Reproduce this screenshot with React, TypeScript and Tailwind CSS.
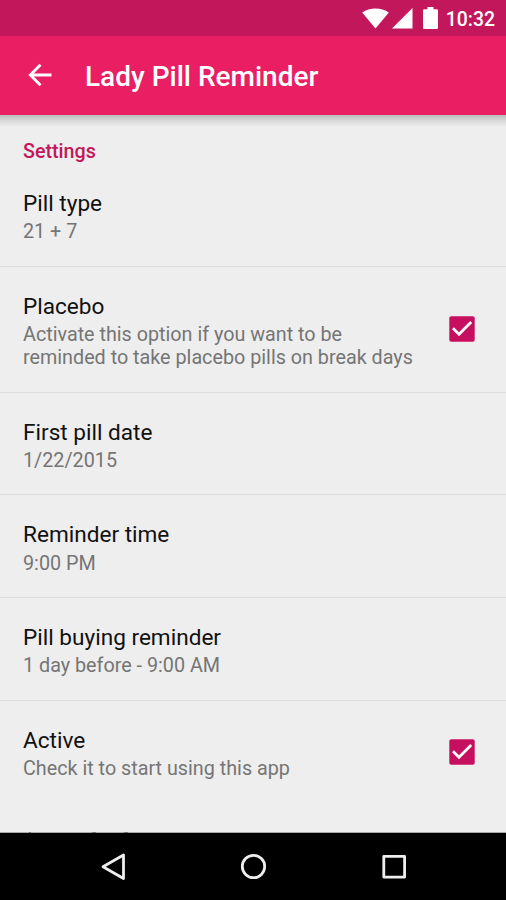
type Preference = {
  title: string;
  summary: string;
  checked?: boolean;
  size: string;
};

const preferences: Preference[] = [
  { title: "Pill type", summary: "21 + 7", size: "h-[103px]" },
  {
    title: "Placebo",
    summary:
      "Activate this option if you want to be reminded to take placebo pills on break days",
    checked: true,
    size: "h-[125.7px]",
  },
  { title: "First pill date", summary: "1/22/2015", size: "h-[102.7px]" },
  { title: "Reminder time", summary: "9:00 PM", size: "h-[102.7px]" },
  {
    title: "Pill buying reminder",
    summary: "1 day before - 9:00 AM",
    size: "h-[102.7px]",
  },
  {
    title: "Active",
    summary: "Check it to start using this app",
    checked: true,
    size: "h-[102.7px]",
  },
];

function StatusBar() {
  return (
    <div className="flex h-9 items-center justify-end bg-[#c2185b] pr-[11px] text-white">
      <svg width="27" height="21" viewBox="0 0 27 21" fill="currentColor">
        <path d="M13.5 20.5 0.2 4.6C4 1.7 8.5.5 13.5.5s9.5 1.2 13.3 4.1z" />
      </svg>
      <svg className="ml-[3px]" width="21" height="21" viewBox="0 0 21 21" fill="currentColor">
        <path d="M20.5 0v20.5H0z" />
      </svg>
      <svg className="ml-[10px]" width="15" height="22" viewBox="0 0 15 22" fill="currentColor">
        <path d="M4.5 0h6v2.2h3.3q1.2 0 1.2 1.2v17.4q0 1.2-1.2 1.2H1.2Q0 22 0 20.8V3.4q0-1.2 1.2-1.2h3.3z" />
      </svg>
      <span className="ml-[8px] mt-[3px] text-[19.4px] leading-6 font-medium">10:32</span>
    </div>
  );
}

function AppBar() {
  return (
    <header className="flex h-[78.5px] shrink-0 items-center bg-[#e91e63] pl-7 text-white">
      <svg width="24" height="24" viewBox="0 0 24 24" fill="none" stroke="currentColor" strokeWidth="2.8">
        <path d="M23.5 12H2.5M12.5 1.8 2.3 12l10.2 10.2" />
      </svg>
      <h1 className="ml-[33px] mt-1 text-[28px] leading-8 font-medium whitespace-nowrap">
        Lady Pill Reminder
      </h1>
    </header>
  );
}

function Checkbox() {
  return (
    <svg className="shrink-0" width="26" height="26" viewBox="0 0 26 26">
      <rect x="0.3" y="0.3" width="25.4" height="25.4" rx="2" fill="#c70f60" />
      <path d="m4 12.3 6 6L22.2 6" fill="none" stroke="#fff" strokeWidth="2.7" />
    </svg>
  );
}

function PreferenceRow({ title, summary, checked, size }: Preference) {
  return (
    <li
      className={`flex items-center justify-between border-b border-[#dcdcdc] pl-[23px] pr-[31px] last:border-transparent ${size}`}
    >
      <div className="w-[400px] pt-[3.6px]">
        <h3 className="text-[22.6px] leading-[27px] text-[#111]">{title}</h3>
        <p className="mt-[3.4px] text-[19.75px] leading-[23px] text-[#757575]">{summary}</p>
      </div>
      {checked && <Checkbox />}
    </li>
  );
}

function NavigationBar() {
  return (
    <nav className="flex h-[67px] shrink-0 items-start justify-center bg-black">
      <svg width="506" height="66" viewBox="0 0 506 66" fill="none" stroke="#eee" strokeWidth="2.8" strokeLinejoin="round">
        <path d="M123.5 22v23.5L103 33.7z" />
        <circle cx="253.5" cy="33.5" r="11.2" />
        <rect x="383.8" y="23.3" width="20.8" height="20.8" />
      </svg>
    </nav>
  );
}

export default function App() {
  return (
    <div className="flex h-[900px] w-[506px] flex-col overflow-hidden bg-[#eee] font-[Roboto,sans-serif]">
      <StatusBar />
      <AppBar />
      <main className="flex min-h-0 flex-1 flex-col overflow-hidden">
        <div className="h-3 shrink-0 bg-linear-to-b from-[#bcbcbc] via-[#dadada] to-[#eee]" />
        <h2 className="h-[37.5px] shrink-0 pt-[13px] pl-[23px] text-[19.7px] leading-6 font-medium text-[#c2185b]">
          Settings
        </h2>
        <ul>
          {preferences.map((preference) => (
            <PreferenceRow key={preference.title} {...preference} />
          ))}
        </ul>
        {/* tops of the next entry, cut off by the navigation bar */}
        <div className="mt-auto flex h-px shrink-0 bg-[#a8a8a8] pl-[29px]">
          <span className="w-[2px] bg-[#707070]" />
          <span className="ml-[61px] w-[4px] bg-[#707070]" />
          <span className="ml-[28px] w-[4px] bg-[#707070]" />
        </div>
      </main>
      <NavigationBar />
    </div>
  );
}
